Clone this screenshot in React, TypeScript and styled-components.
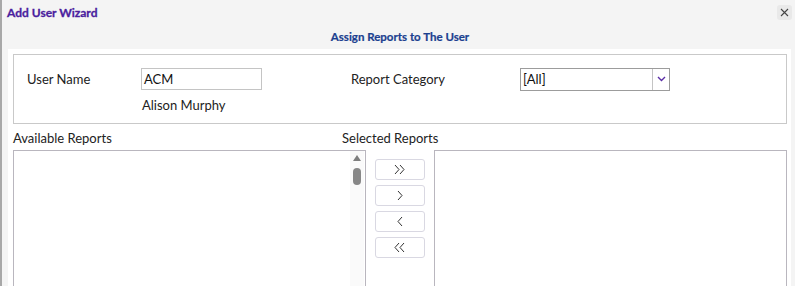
import React from "react";
import styled, { createGlobalStyle } from "styled-components";

const Global = createGlobalStyle`
  html, body { margin: 0; padding: 0; background: #f4f4f4; }
  body { font-family: Lato, "Noto Sans", Arial, sans-serif; color: #222; }
  * { box-sizing: border-box; }
`;

const Window = styled.div`
  width: 795px;
  height: 286px;
  overflow: hidden;
  background: #f4f4f4;
  border-left: 2px solid #a8a8a8;
  display: flex;
  flex-direction: column;
`;

const Header = styled.div`
  height: 24px;
  display: flex;
  align-items: center;
  justify-content: space-between;
  padding: 0 3px 0 5px;
`;

const Title = styled.div`
  font-size: 12px;
  font-weight: 700;
  color: #4b1e9e;
  -webkit-text-stroke: 0.3px #4b1e9e;
`;

const CloseButton = styled.button`
  width: 15px;
  height: 15px;
  padding: 0;
  border: none;
  border-radius: 3px;
  background: #e9e9e9;
  display: flex;
  align-items: center;
  justify-content: center;
  margin-top: 1px;
`;

const Subtitle = styled.div`
  height: 25px;
  display: flex;
  align-items: center;
  justify-content: center;
  font-size: 11.5px;
  font-weight: 700;
  color: #1b3f8f;
  -webkit-text-stroke: 0.2px #1b3f8f;
  padding-left: 3px;
`;

const Content = styled.div`
  flex: 1;
  background: #fff;
  margin: 0 4px 0 6px;
  padding: 5px 0 0 5px;
  display: flex;
  flex-direction: column;
`;

const Panel = styled.div`
  width: 774px;
  height: 70px;
  border: 1px solid #c9c9c9;
  padding: 13px 0 0 13px;
  display: grid;
  grid-template-columns: 114px 210px 169px 1fr;
  grid-template-rows: 22px 22px;
  row-gap: 4px;
  align-items: center;
`;

const Label = styled.div`
  font-size: 13px;
  color: #222;
`;

const TextInput = styled.div`
  width: 121px;
  height: 22px;
  border: 1px solid #c4c4c4;
  font-size: 13px;
  padding: 0 0 0 2px;
  display: flex;
  align-items: center;
  color: #111;
`;

const SubName = styled.div`
  font-size: 13px;
  color: #222;
  padding-left: 1px;
`;

const Select = styled.div`
  width: 150px;
  height: 23px;
  border: 1px solid #9c9c9c;
  display: flex;
  align-items: stretch;
  font-size: 13px;
  color: #111;
`;

const SelectValue = styled.div`
  flex: 1;
  display: flex;
  align-items: center;
  padding-left: 2px;
`;

const SelectArrow = styled.div`
  width: 17px;
  border-left: 1px solid #c4c4c4;
  display: flex;
  align-items: center;
  justify-content: center;
`;

const ListLabels = styled.div`
  height: 26px;
  display: grid;
  grid-template-columns: 329px 1fr;
  align-items: center;
  font-size: 13px;
  padding-top: 2px;
`;

const ListsRow = styled.div`
  flex: 1;
  display: flex;
  gap: 9px;
`;

const ListBox = styled.div`
  width: 353px;
  border: 1px solid #b9b6be;
  border-bottom: none;
  background: #fff;
  display: flex;
`;

const ListBody = styled.div`
  flex: 1;
`;

const ScrollTrack = styled.div`
  width: 14px;
  margin-right: 1px;
  background: #fafafa;
  display: flex;
  flex-direction: column;
  align-items: center;
  padding-top: 4px;
  gap: 7px;
`;

const ScrollUp = styled.div`
  width: 0;
  height: 0;
  border-left: 4px solid transparent;
  border-right: 4px solid transparent;
  border-bottom: 6px solid #7e7e7e;
`;

const ScrollThumb = styled.div`
  width: 8px;
  height: 17px;
  border-radius: 4px;
  background: #878787;
`;

const ButtonColumn = styled.div`
  width: 50px;
  padding-top: 9px;
  display: flex;
  flex-direction: column;
  gap: 5px;
`;

const MoveButton = styled.button`
  width: 50px;
  height: 21px;
  padding: 0;
  border: 1px solid #d9d8e2;
  border-radius: 3px;
  background: #fff;
  display: flex;
  align-items: center;
  justify-content: center;
  cursor: pointer;
`;

const Chevron: React.FC<{ dir: "left" | "right"; double?: boolean }> = ({ dir, double }) => {
  const one = dir === "right" ? "M1 1 L5 5.5 L1 10" : "M5 1 L1 5.5 L5 10";
  return (
    <svg width={double ? 12 : 7} height="11" viewBox={double ? "0 0 12 11" : "0 0 7 11"} fill="none" stroke="#333" strokeWidth="1">
      <path d={one} />
      {double && <path d={one} transform="translate(5 0)" />}
    </svg>
  );
};

export default function App() {
  return (
    <>
      <Global />
      <Window>
        <Header>
          <Title>Add User Wizard</Title>
          <CloseButton aria-label="Close">
            <svg width="9" height="9" viewBox="0 0 9 9" stroke="#444" strokeWidth="1.1">
              <path d="M1 1 L8 8 M8 1 L1 8" />
            </svg>
          </CloseButton>
        </Header>
        <Subtitle>Assign Reports to The User</Subtitle>
        <Content>
          <Panel>
            <Label>User Name</Label>
            <TextInput>ACM</TextInput>
            <Label>Report Category</Label>
            <Select>
              <SelectValue>[All]</SelectValue>
              <SelectArrow>
                <svg width="9" height="6" viewBox="0 0 9 6" fill="none" stroke="#5b2ea6" strokeWidth="1.4">
                  <path d="M1 1 L4.5 4.5 L8 1" />
                </svg>
              </SelectArrow>
            </Select>
            <div />
            <SubName>Alison Murphy</SubName>
          </Panel>
          <ListLabels>
            <div>Available Reports</div>
            <div>Selected Reports</div>
          </ListLabels>
          <ListsRow>
            <ListBox>
              <ListBody />
              <ScrollTrack>
                <ScrollUp />
                <ScrollThumb />
              </ScrollTrack>
            </ListBox>
            <ButtonColumn>
              <MoveButton aria-label="Add all"><Chevron dir="right" double /></MoveButton>
              <MoveButton aria-label="Add"><Chevron dir="right" /></MoveButton>
              <MoveButton aria-label="Remove"><Chevron dir="left" /></MoveButton>
              <MoveButton aria-label="Remove all"><Chevron dir="left" double /></MoveButton>
            </ButtonColumn>
            <ListBox>
              <ListBody />
            </ListBox>
          </ListsRow>
        </Content>
      </Window>
    </>
  );
}
